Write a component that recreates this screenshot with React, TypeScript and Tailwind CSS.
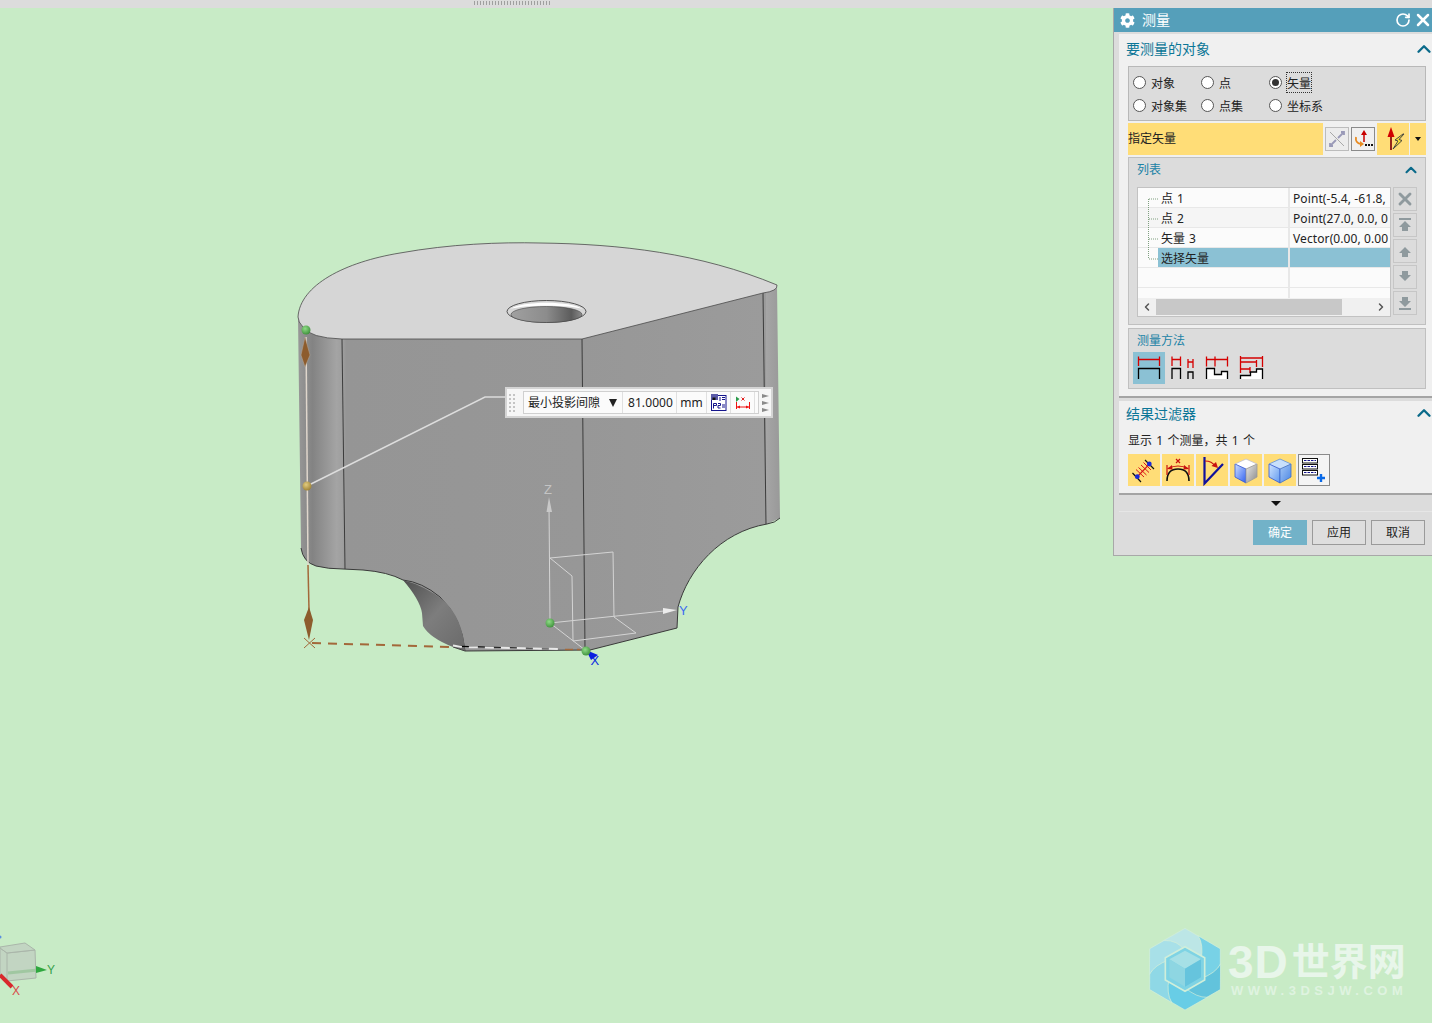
import React from 'react';
import { ChevronUp, ChevronLeft, ChevronRight, RotateCw, X } from 'lucide-react';
import { FaCog } from 'react-icons/fa';

const FONT = '"Noto Sans", "Noto Sans CJK SC", sans-serif';

const Model: React.FC = () => (
  <svg className="absolute left-0 top-0" width={1432} height={1023} viewBox="0 0 1432 1023">
    <defs>
      <linearGradient id="body" gradientUnits="userSpaceOnUse" x1="298" y1="0" x2="780" y2="0">
        <stop offset="0" stopColor="#989898" />
        <stop offset="0.03" stopColor="#838383" />
        <stop offset="0.08" stopColor="#a4a4a4" />
        <stop offset="0.093" stopColor="#9e9e9e" />
        <stop offset="0.1" stopColor="#959595" />
        <stop offset="0.59" stopColor="#979797" />
        <stop offset="0.97" stopColor="#9b9b9b" />
        <stop offset="0.972" stopColor="#a5a5a5" />
        <stop offset="1" stopColor="#999999" />
      </linearGradient>
      <linearGradient id="scoop" x1="0" y1="0" x2="1" y2="1">
        <stop offset="0" stopColor="#4f4f4f" />
        <stop offset="0.5" stopColor="#7d7d7d" />
        <stop offset="1" stopColor="#6a6a6a" />
      </linearGradient>
      <linearGradient id="hole" x1="0" y1="0" x2="1" y2="0">
        <stop offset="0" stopColor="#a0a0a0" />
        <stop offset="0.5" stopColor="#8c8c8c" />
        <stop offset="0.85" stopColor="#5c5c5c" />
        <stop offset="1" stopColor="#8a8a8a" />
      </linearGradient>
      <radialGradient id="ball" cx="0.4" cy="0.35" r="0.7">
        <stop offset="0" stopColor="#8fdc86" />
        <stop offset="1" stopColor="#3d8f3a" />
      </radialGradient>
      <radialGradient id="ballY" cx="0.4" cy="0.35" r="0.7">
        <stop offset="0" stopColor="#e2cc80" />
        <stop offset="1" stopColor="#9c8034" />
      </radialGradient>
    </defs>

    {/* body */}
    <path
      d="M298 317 L301 548 Q303 562 316 566 Q328 569 343 569 L363 570 Q388 572 403 580 L465 651 L590 650 L677 628 L678 607 C688 570 720 532 767 524 L780 518 L777 285 Z"
      fill="url(#body)"
    />
    <path d="M301 548 Q303 562 316 566 Q328 569 343 569 L363 570 Q388 572 403 580 Q422 582 440 597 Q462 618 465 651 L590 650 L677 628 L678 607 C688 570 720 532 767 524 Q775 523 780 518" fill="none" stroke="#3a3a3a" strokeWidth="1" />
    <path d="M403 580 Q420 600 422 613 L423 626 Q430 638 453 647 L465 651 Q463 618 443 600 Q425 586 403 580 Z" fill="url(#scoop)" />
    <path d="M453 647 L465 651" stroke="#444" />
    <path d="M342 339 L345 569 M582 339 L585 650 M763 293 L766 524" stroke="#3c3c3c" strokeWidth="1" fill="none" />

    {/* top face */}
    <path
      d="M298 317 C300 285 345 262 400 253 C450 244 500 242 540 243 C620 244 700 253 777 285 Q778 291 763 293 L582 339 L342 339 Q310 338 303 327 Q298 322 298 317 Z"
      fill="#d6d6d6"
      stroke="#4a4a4a"
      strokeWidth="0.8"
    />
    <ellipse cx="546.5" cy="311.5" rx="39.5" ry="11" fill="#d6d6d6" stroke="#333" strokeWidth="0.8" />
    <path d="M510 309 C522 300.5 571 300.5 583 309 C570 304.5 523 304.5 510 309 Z" fill="#ffffff" />
    <ellipse cx="546.5" cy="314.5" rx="35.5" ry="8" fill="url(#hole)" stroke="#444" strokeWidth="0.6" />

    {/* measurement lines */}
    <path d="M306 337 L308 565" stroke="#dfd6cc" strokeWidth="1.5" />
    <path d="M308 565 L309 610" stroke="#a3683a" strokeWidth="1.5" />
    <path d="M301 355 L305 337 L310 355 L305 367 Z" fill="#8d5c2d" stroke="#b5a898" strokeWidth="0.5" />
    <path d="M304 620 L309 607 L313 620 L309 640 Z" fill="#8d5c2d" />
    <path d="M304 638 L315 648 M315 638 L304 648" stroke="#a3683a" strokeWidth="1" />
    <path d="M312 643 L453 647" stroke="#a3683a" strokeWidth="2" strokeDasharray="9 7" />
    <path d="M453 645.5 L462 647 L560 649" stroke="#e8e8e8" strokeWidth="2" strokeDasharray="9 7" />
    <path d="M565 649.5 L580 649.5" stroke="#a3683a" strokeWidth="1.5" strokeDasharray="8 4" />
    <path d="M307 486 L485 397 L507 397" fill="none" stroke="#dcdcdc" strokeWidth="1.5" />
    <circle cx="306" cy="330" r="4.5" fill="url(#ball)" />
    <circle cx="307" cy="486" r="4.5" fill="url(#ballY)" />

    {/* wcs */}
    <g fill="none" stroke="#d4d4d4" strokeWidth="1">
      <path d="M550 623 L549 505" />
      <path d="M550 558 L613 552 L614 617 L636 633 L573 641 L572 576 L550 558" />
      <path d="M550 623 L664 611" />
      <path d="M550 623 L585 650" />
    </g>
    <path d="M549 497 L546.5 512 L552 512 Z" fill="#c8c8c8" />
    <path d="M663 608 L677 610 L663 614 Z" fill="#ececec" />
    <text x="544" y="494" fontSize="13" fill="#c4c4c4" fontFamily="Liberation Sans, sans-serif">Z</text>
    <text x="679" y="615" fontSize="13" fill="#3d6cf0" fontFamily="Liberation Sans, sans-serif">Y</text>
    <text x="590.5" y="665" fontSize="13" fill="#0a2ae0" fontFamily="Liberation Sans, sans-serif">X</text>
    <path d="M586 650 L598 655 L591 660 Z" fill="#0a1ee0" />
    <circle cx="550" cy="623" r="4.5" fill="url(#ball)" />
    <circle cx="586" cy="651" r="4.5" fill="url(#ball)" />

    {/* corner triad */}
    <g fill="#c0cfc0" fillOpacity="0.8" stroke="#aab6aa" strokeWidth="1">
      <path d="M7 953 L35 950 L36 978 L7 981 L0 975 V948 Z" />
      <path d="M0 947 L25 943 L35 950 L7 953 L0 948 Z" />
    </g>
    <path d="M7 953 V981" stroke="#aab6aa" fill="none" />
    <path d="M8 973 L38 970" stroke="#98c49a" strokeWidth="3" opacity="0.8" />
    <path d="M36 966 L47 970 L36 973 Z" fill="#2fa83f" />
    <path d="M0 975 L12 987" stroke="#d8282c" strokeWidth="4" />
    <text x="47" y="974" fontSize="12" fill="#37a04a" fontFamily="Liberation Sans, sans-serif">Y</text>
    <text x="12" y="995" fontSize="12" fill="#d84a4a" fontFamily="Liberation Sans, sans-serif">X</text>
    <circle cx="0" cy="937" r="1.5" fill="#5a8ee0" />
  </svg>
);

const Watermark: React.FC = () => {
  const fills = ['#bce6e6', '#78d2e6', '#62c3dc', '#68cde6', '#8fd8e6', '#a8e0e8'];
  return (
    <div className="absolute left-[1140px] top-[920px] h-[100px] w-[280px]">
      <svg className="absolute left-0 top-0" width={280} height={100} viewBox="0 0 840 300">
        {fills.map((f, i) => (
          <path
            key={f}
            d="M68 63 L135 25 L178 50 Q200 85 183 118 L135 92 Q100 62 68 63 Z"
            fill={f}
            stroke="#d4efd8"
            strokeWidth="2"
            transform={`rotate(${i * 60} 135 147.5)`}
          />
        ))}
        <path d="M135 80 L194 113 V180 L135 214 L76 180 V113 Z" fill="#7ed3e4" stroke="#cfeeda" strokeWidth="5" />
        <path d="M135 92 L183 118 L135 146 L88 118 Z" fill="#a6e0e6" />
        <path d="M88 118 L135 146 L135 200 L88 172 Z" fill="#8ed6e2" />
        <path d="M183 118 L135 146 L135 200 L183 172 Z" fill="#66c4dd" />
      </svg>
      <div
        className="absolute left-[88px] top-[20px] flex h-[44px] items-center whitespace-nowrap text-[46px] font-bold leading-[44px] text-[#e8f6ea]"
        style={{ fontFamily: '"Liberation Sans", "Noto Sans CJK SC", sans-serif' }}
      >
        <span className="mr-[3px] tracking-[1px]">3D</span>
        <span className="text-[38px] leading-[38px]">世界网</span>
      </div>
      <div className="absolute left-[91px] top-[65px] whitespace-nowrap font-['Liberation_Sans'] text-[13px] font-bold leading-[12px] tracking-[4.5px] text-[#dff3e0]">
        WWW.3DSJW.COM
      </div>
    </div>
  );
};

const MeasureBar: React.FC = () => (
  <div className="absolute left-[505px] top-[387px] flex h-[31px] w-[268px] items-center border-2 border-[#d4d4d4] bg-[#f6f6f6] text-[12px] text-[#222]">
    <div className="ml-[2px] grid w-[6px] grid-cols-2 gap-[2px]">
      {Array.from({ length: 10 }).map((_, i) => (
        <span key={i} className="h-[2px] w-[2px] bg-[#c4c4c4]" />
      ))}
    </div>
    <div className="ml-[8px] flex h-[23px] w-[236px] items-center border border-[#d0d0d0] bg-[#fbfbfb]">
      <div className="flex h-full w-[99px] items-center justify-between border-r border-[#e0e0e0] pl-[4px] pr-[5px]">
        <span>最小投影间隙</span>
        <span className="h-0 w-0 border-x-[4.5px] border-t-[8px] border-x-transparent border-t-[#222]" />
      </div>
      <div className="flex h-full w-[54px] items-center justify-center border-r border-[#e0e0e0] pl-[2px] tracking-[0.1px]">81.0000</div>
      <div className="flex h-full w-[30px] items-center justify-center border-r border-[#e0e0e0]">mm</div>
      <div className="flex h-full w-[24px] items-center justify-center border-r border-[#e0e0e0]">
        <svg width="17" height="17" viewBox="0 0 17 17">
          <rect x="1.5" y="1.5" width="14.5" height="15" fill="#fff" stroke="#14148c" strokeWidth="1" />
          <rect x="1" y="0" width="7" height="6" fill="#5a5aa8" />
          <rect x="2.5" y="3.5" width="3" height="2.5" fill="#111" />
          <path d="M10 3 V7 M12 3.5 H15 M12 5.5 H15" stroke="#14148c" strokeWidth="1" fill="none" />
          <path d="M3.5 14.5 V9.5 H6.5 V11.5 H3.5 M8 9.5 H10.5 V11.5 H8 V14 H10.5 M12 11 H15 M12 13 H15" stroke="#14148c" strokeWidth="1" fill="none" />
        </svg>
      </div>
      <div className="flex h-full w-[24px] items-center justify-center border-r border-[#e0e0e0]">
        <svg width="16" height="14" viewBox="0 0 16 14">
          <path d="M1.5 6 V13 M14.5 6 V13 M1.5 11 H14.5" stroke="#f01010" strokeWidth="1" fill="none" />
          <path d="M2 11 L5 9.5 V12.5 Z M14 11 L11 9.5 V12.5 Z" fill="#f01010" />
          <path d="M1 0.5 L4.5 3 L1 6 Z" fill="#2a9a4a" />
          <path d="M6.5 1.5 L9.5 4.5 M9.5 1.5 L6.5 4.5" stroke="#e02020" strokeWidth="1" />
        </svg>
      </div>
    </div>
    <div className="ml-[3px] flex flex-col gap-[3px]">
      {[0, 1, 2].map((i) => (
        <span key={i} className="h-0 w-0 border-y-[2.5px] border-l-[7px] border-y-transparent border-l-[#8a8a8a]" />
      ))}
    </div>
  </div>
);

const Radio: React.FC<{ label: string; checked?: boolean; focused?: boolean; width: string }> = ({ label, checked, focused, width }) => (
  <div className={`flex items-center ${width}`}>
    <span className="flex h-[13px] w-[13px] items-center justify-center rounded-full border border-[#555] bg-white">
      {checked && <span className="h-[7px] w-[7px] rounded-full bg-[#333]" />}
    </span>
    <span className={`ml-[5px] h-[19px] text-[12px] leading-[21px] text-[#222] ${focused ? 'outline-1 outline-dotted outline-[#333]' : ''}`}>
      {label}
    </span>
  </div>
);

const ListBtn: React.FC<{ children: React.ReactNode }> = ({ children }) => (
  <div className="flex h-[24px] w-[24px] items-center justify-center border border-[#c6c6c6] bg-[#dcdcdc]">{children}</div>
);

const MoveIcon: React.FC<{ rot: number; bar?: boolean }> = ({ rot, bar }) => (
  <svg width="14" height="14" viewBox="0 0 14 14" style={{ transform: `rotate(${rot}deg)` }}>
    {bar && <rect x="1" y="0" width="12" height="2" fill="#8f9a9e" />}
    <path d="M7 3 L13 9 H10 V13 H4 V9 H1 Z" fill="#8f9a9e" />
  </svg>
);

const rows = [
  ['点 1', 'Point(-5.4, -61.8,'],
  ['点 2', 'Point(27.0, 0.0, 0'],
  ['矢量 3', 'Vector(0.00, 0.00'],
];

const ListTable: React.FC = () => (
  <div className="relative h-[130px] w-[254px] border border-[#c2c2c2] bg-[#fbfbfb] text-[12px] text-[#222]">
    {rows.map(([name, value], i) => (
      <div key={name} className={`flex h-[20px] border-b border-[#e8e8e8] ${i === 1 ? 'bg-[#f5f5f5]' : ''}`}>
        <div className="h-full w-[150px] pl-[23px] leading-[21px] [word-spacing:1px]">{name}</div>
        <div className="h-full w-[102px] whitespace-nowrap border-l-2 border-[#e8e8e8] pl-[3px] leading-[21px] tracking-[0.1px]">{value}</div>
      </div>
    ))}
    <div className="flex h-[20px] border-b border-[#e8e8e8]">
      <div className="ml-[20px] h-full w-[130px] bg-[#8bc1d4] pl-[3px] leading-[21px]">选择矢量</div>
      <div className="h-full w-[102px] border-l-2 border-[#e8e8e8] bg-[#8bc1d4]" />
    </div>
    <div className="flex h-[20px] border-b border-[#e8e8e8]">
      <div className="w-[150px]" />
      <div className="border-l-2 border-[#e8e8e8]" />
    </div>
    <div className="flex h-[10px]">
      <div className="w-[150px]" />
      <div className="border-l-2 border-[#e8e8e8]" />
    </div>
    <div className="flex h-[18px] items-center justify-between bg-[#f0f0f0]">
      <ChevronLeft size={12} strokeWidth={3} className="ml-[3px] text-[#555]" />
      <div className="absolute left-[18px] h-[16px] w-[186px] bg-[#c8c8c8]" />
      <ChevronRight size={12} strokeWidth={3} className="mr-[3px] text-[#555]" />
    </div>
    {/* tree lines */}
    <svg className="absolute left-0 top-0" width={22} height={74}>
      <path d="M10.5 11 V71 M11 11 H20 M11 31 H20 M11 51 H20 M11 71 H20" stroke="#7f9f7f" strokeWidth="1" strokeDasharray="1 1" fill="none" />
    </svg>
  </div>
);

const Ico: React.FC<{ children: React.ReactNode }> = ({ children }) => (
  <svg width="32" height="32" viewBox="0 0 32 32">
    {children}
  </svg>
);

const MethodIcons: React.FC = () => (
  <div className="flex gap-[2px] pl-[4px]">
    <div className="bg-[#8bc1d4]">
      <Ico>
        <path d="M5.5 4.5 V14 M26.5 4.5 V14 M5.5 7.5 H26.5" stroke="#d40000" strokeWidth="1.3" fill="none" />
        <path d="M5.5 27 V16.5 H26.5 V27" stroke="#000" strokeWidth="1.3" fill="none" />
      </Ico>
    </div>
    <Ico>
      <path d="M5 4.5 V14 M13.5 4.5 V14 M5 7.5 H13.5 M21 7 V16 M26 7 V16 M21 10 H26" stroke="#d40000" strokeWidth="1.3" fill="none" />
      <path d="M5 27 V16.5 H13.5 V27 M21 27 V20 H26 V27" stroke="#000" strokeWidth="1.3" fill="none" />
    </Ico>
    <Ico>
      <path d="M5.5 4.5 V14.5 M14 4.5 V14.5 M26.5 4.5 V14.5 M5.5 7.5 H26.5" stroke="#d40000" strokeWidth="1.3" fill="none" />
      <path d="M5.5 27 V16.5 H13.5 V22.5 H20.5 V19.5 H26.5 V27 Z" fill="#fff" />
      <path d="M5.5 27 V16.5 H13.5 V22.5 H20.5 V19.5 H26.5 V27" stroke="#000" strokeWidth="1.3" fill="none" />
    </Ico>
    <Ico>
      <path d="M5.5 4 V21 M5.5 6 H27.5 M27.5 4 V15 M5.5 10 H21.5 M21.5 8 V15 M5.5 17 H15 M15 15 V21" stroke="#d40000" strokeWidth="1.3" fill="none" />
      <path d="M5.5 27 V23.5 H15.5 V20 H21.5 V17 H27.5 V27 Z" fill="#fff" />
      <path d="M5.5 27 V23.5 H15.5 V20 H21.5 V17 H27.5 V27" stroke="#000" strokeWidth="1.3" fill="none" />
    </Ico>
  </div>
);

const Cube: React.FC<{ id: string; blue?: boolean }> = ({ id, blue }) => (
  <Ico>
    <defs>
      <linearGradient id={`${id}l`} x1="0" y1="0" x2="1" y2="1">
        <stop offset="0" stopColor={blue ? '#cfe4ff' : '#cfe0ff'} />
        <stop offset="1" stopColor={blue ? '#5f98ee' : '#2f5ff0'} />
      </linearGradient>
      <linearGradient id={`${id}r`} x1="0" y1="0" x2="1" y2="1">
        <stop offset="0" stopColor={blue ? '#a6c8f6' : '#e8e8e8'} />
        <stop offset="1" stopColor={blue ? '#4a86e4' : '#8a8a8a'} />
      </linearGradient>
    </defs>
    <path d="M16 5 L27 10 L16 15 L5 10 Z" fill={blue ? '#c8e0fb' : '#ffffff'} />
    <path d="M5 10 L16 15 V29 L5 23 Z" fill={`url(#${id}l)`} stroke="#2f55d8" strokeWidth="0.8" />
    <path d="M27 10 L16 15 V29 L27 23 Z" fill={`url(#${id}r)`} stroke={blue ? '#3f70c8' : '#9a9a9a'} strokeWidth="0.8" />
    <path d="M16 5 L27 10 M16 5 L5 10" stroke={blue ? '#5f90d8' : '#c0c0d0'} strokeWidth="0.8" />
  </Ico>
);

const FilterIcons: React.FC = () => (
  <div className="flex gap-[2px]">
    <div className="bg-[#ffdd77]">
      <Ico>
        <path d="M4.5 19 L13 28 M17 6 L26 15" stroke="#111" strokeWidth="1.2" />
        <path d="M9 23 L21.5 10" stroke="#d81818" strokeWidth="1.1" />
        <path d="M8 15.5 L16 23 M10.5 13.5 L18.5 21 M13 11 L21 18.5 M15.5 8.5 L23 16" stroke="#d81818" strokeWidth="1" />
        <circle cx="9.3" cy="22.7" r="2.4" fill="#1a2ad8" />
        <circle cx="21.3" cy="10" r="2.4" fill="#1a2ad8" />
      </Ico>
    </div>
    <div className="bg-[#ffdd77]">
      <Ico>
        <path d="M5 27 Q5 15 16 15 Q27 15 27 27" stroke="#111" strokeWidth="1.6" fill="none" />
        <path d="M5 11 V21 M27 11 V21 M6 14.5 Q16 9.5 26 14.5" stroke="#c81010" strokeWidth="1.2" fill="none" />
        <path d="M5 15 L10 11 L10.5 15.5 Z M27 15 L22 11 L21.5 15.5 Z" fill="#c81010" />
        <path d="M14 5 L18 9 M18 5 L14 9" stroke="#c81010" strokeWidth="1.2" />
      </Ico>
    </div>
    <div className="bg-[#ffdd77]">
      <Ico>
        <path d="M8.5 3 V29.5 L27 10" stroke="#10109c" strokeWidth="2.2" fill="none" />
        <path d="M9 7 Q16 7 19 12" stroke="#c81010" strokeWidth="1.2" fill="none" />
        <path d="M22 14 L15.5 12 L20 8 Z" fill="#c81010" />
      </Ico>
    </div>
    <div className="bg-[#ffdd77]">
      <Cube id="cube1" />
    </div>
    <div className="bg-[#ffdd77]">
      <Cube id="cube2" blue />
    </div>
    <div className="h-[32px] w-[32px] border border-[#8a8a8a] bg-[#f4f4f4]">
      <svg width="30" height="30" viewBox="0 0 30 30">
        {[3, 9, 15].map((y) => (
          <g key={y}>
            <rect x="3.5" y={y + 0.5} width="15" height="4.5" fill="#fff" stroke="#111" strokeWidth="1" />
            <path d={`M5 ${y + 2.5} H17`} stroke="#14148c" strokeWidth="1" strokeDasharray="2.5 1" />
          </g>
        ))}
        <path d="M22 19 V27 M18 23 H26" stroke="#0a6ae8" strokeWidth="2.4" />
      </svg>
    </div>
  </div>
);

const Dialog: React.FC = () => (
  <div className="absolute left-[1113px] top-[8px] h-[548px] w-[319px] border-b border-l border-[#a8a8a8] bg-[#dcdcdc]">
    <div className="flex h-[24px] items-center bg-[#559fba] pl-[6px] text-white">
      <FaCog size={15} />
      <span className="ml-[7px] flex-1 text-[14px] leading-[18px]">测量</span>
      <RotateCw size={16} strokeWidth={2.5} className="mr-[2px]" />
      <X size={20} strokeWidth={3} className="-mr-[1px]" />
    </div>

    <div className="ml-[5px] mt-[2px] h-[364px] border-b-2 border-[#a4a4a4] bg-[#f0f0f0]">
      <div className="flex h-[32px] items-center justify-between pb-[3px] pl-[7px]">
        <span className="text-[14px] leading-[18px] text-[#0b7697]">要测量的对象</span>
        <ChevronUp size={22} strokeWidth={2.6} className="-mr-[3px] text-[#0a6a8a]" />
      </div>
      <div className="ml-[9px] w-[298px]">
        <div className="flex h-[55px] flex-col justify-center gap-[4px] border border-[#b8b8b8] bg-[#dcdcdc] pl-[4px]">
          <div className="flex">
            <Radio label="对象" width="w-[68px]" />
            <Radio label="点" width="w-[68px]" />
            <Radio label="矢量" width="w-[68px]" checked focused />
          </div>
          <div className="flex">
            <Radio label="对象集" width="w-[68px]" />
            <Radio label="点集" width="w-[68px]" />
            <Radio label="坐标系" width="w-[68px]" />
          </div>
        </div>

        <div className="mt-[2px] flex h-[32px] items-center">
          <div className="flex h-full w-[195px] items-center bg-[#ffdd77] text-[12px] text-[#222]">指定矢量</div>
          <div className="ml-[2px] flex h-[24px] w-[24px] items-center justify-center border border-[#bcbcbc] bg-[#ececec]">
            <svg width="18" height="18" viewBox="0 0 18 18">
              <path d="M2 2 L16 16" stroke="#a8a8a8" strokeWidth="1" />
              <path d="M10 8 L16 2 M13 2 H16 V5 M8 10 L2 16 M2 13 V16 H5" stroke="#9a9ab8" strokeWidth="1.8" fill="none" />
            </svg>
          </div>
          <div className="ml-[2px] flex h-[24px] w-[24px] items-center justify-center border border-[#8a8a8a] bg-[#f0f0f0]">
            <svg width="20" height="20" viewBox="0 0 20 20">
              <path d="M11 13 V5" stroke="#c80000" strokeWidth="1.5" />
              <path d="M11 1 L14 6 H8 Z" fill="#c80000" />
              <path d="M3 8 Q2 14 8 15" stroke="#e88a20" strokeWidth="1.8" fill="none" />
              <path d="M11 15 L7 12 V18 Z" fill="#e88a20" />
              <path d="M12 16 H14 M15 16 H17 M18 16 H20" stroke="#111" strokeWidth="2" />
            </svg>
          </div>
          <div className="ml-[2px] flex h-full w-[32px] items-center justify-center bg-[#ffdd77]">
            <svg width="24" height="26" viewBox="0 0 24 26">
              <path d="M10 24 V8" stroke="#8a1010" strokeWidth="1.8" />
              <path d="M10 1 L13.5 11 H6.5 Z" fill="#d00000" />
              <path d="M22 8 L14 14 L17 15 L12 23 L21 14.5 L18 13.5 L23 8 Z" fill="#ffe430" stroke="#444" strokeWidth="1" />
            </svg>
          </div>
          <div className="ml-[1px] flex h-full w-[16px] items-center justify-center bg-[#ffdd77]">
            <span className="h-0 w-0 border-x-[3.5px] border-t-[4px] border-x-transparent border-t-[#111]" />
          </div>
        </div>

        <div className="mt-[2px] h-[168px] border border-[#c0c0c0] bg-[#dcdcdc]">
          <div className="flex h-[23px] items-center justify-between pl-[8px] pr-[5px]">
            <span className="text-[12px] leading-[18px] text-[#1a82a6]">列表</span>
            <ChevronUp size={18} strokeWidth={2.8} className="text-[#0a6a8a]" />
          </div>
          <div className="ml-[8px] mt-[6px] flex gap-[2px]">
            <ListTable />
            <div className="flex flex-col gap-[2px]">
              <ListBtn>
                <X size={20} strokeWidth={3.5} className="text-[#8f9a9e]" />
              </ListBtn>
              <ListBtn>
                <MoveIcon rot={0} bar />
              </ListBtn>
              <ListBtn>
                <MoveIcon rot={0} />
              </ListBtn>
              <ListBtn>
                <MoveIcon rot={180} />
              </ListBtn>
              <ListBtn>
                <MoveIcon rot={180} bar />
              </ListBtn>
            </div>
          </div>
        </div>

        <div className="mt-[3px] h-[61px] border border-[#c0c0c0] bg-[#dcdcdc]">
          <div className="flex h-[23px] items-center pl-[8px] text-[12px] leading-[18px] text-[#1a82a6]">测量方法</div>
          <MethodIcons />
        </div>
      </div>
    </div>

    <div className="ml-[5px] mt-[3px] h-[94px] border-b-2 border-[#a4a4a4] bg-[#f0f0f0]">
      <div className="flex h-[26px] items-center justify-between pl-[7px]">
        <span className="text-[14px] leading-[18px] text-[#0b7697]">结果过滤器</span>
        <ChevronUp size={22} strokeWidth={2.6} className="-mr-[3px] -mt-[2px] text-[#0a6a8a]" />
      </div>
      <div className="flex h-[27px] items-center pl-[9px] pt-[1px] text-[12px] text-[#222] [word-spacing:1.2px]">显示 1 个测量，共 1 个</div>
      <div className="pl-[9px]">
        <FilterIcons />
      </div>
    </div>

    <div className="ml-[5px] flex h-[17px] items-center justify-center border-b border-[#e6e6e6] pl-[1px] pt-[1px]">
      <span className="h-0 w-0 border-x-[5px] border-t-[5px] border-x-transparent border-t-[#111]" />
    </div>
    <div className="mt-[8px] flex justify-end gap-[5px] pr-[7px] text-[12px]">
      <button className="h-[25px] w-[54px] bg-[#72b2c8] text-white">确定</button>
      <button className="h-[25px] w-[54px] border border-[#9a9a9a] bg-[#dedede] text-[#222]">应用</button>
      <button className="h-[25px] w-[54px] border border-[#9a9a9a] bg-[#dedede] text-[#222]">取消</button>
    </div>
  </div>
);

const App: React.FC = () => (
  <div className="relative h-[1023px] w-[1432px] overflow-hidden bg-[#c8ebc6]" style={{ fontFamily: FONT }}>
    <div className="flex h-[8px] items-start justify-center bg-[#dcdcdc] pr-[408px]">
      <div className="mt-[1px] h-[4px] w-[78px] bg-[radial-gradient(#9a9a9a_35%,transparent_40%)] bg-[length:3px_2px]" />
    </div>
    <Model />
    <Watermark />
    <MeasureBar />
    <Dialog />
  </div>
);

export default App;
